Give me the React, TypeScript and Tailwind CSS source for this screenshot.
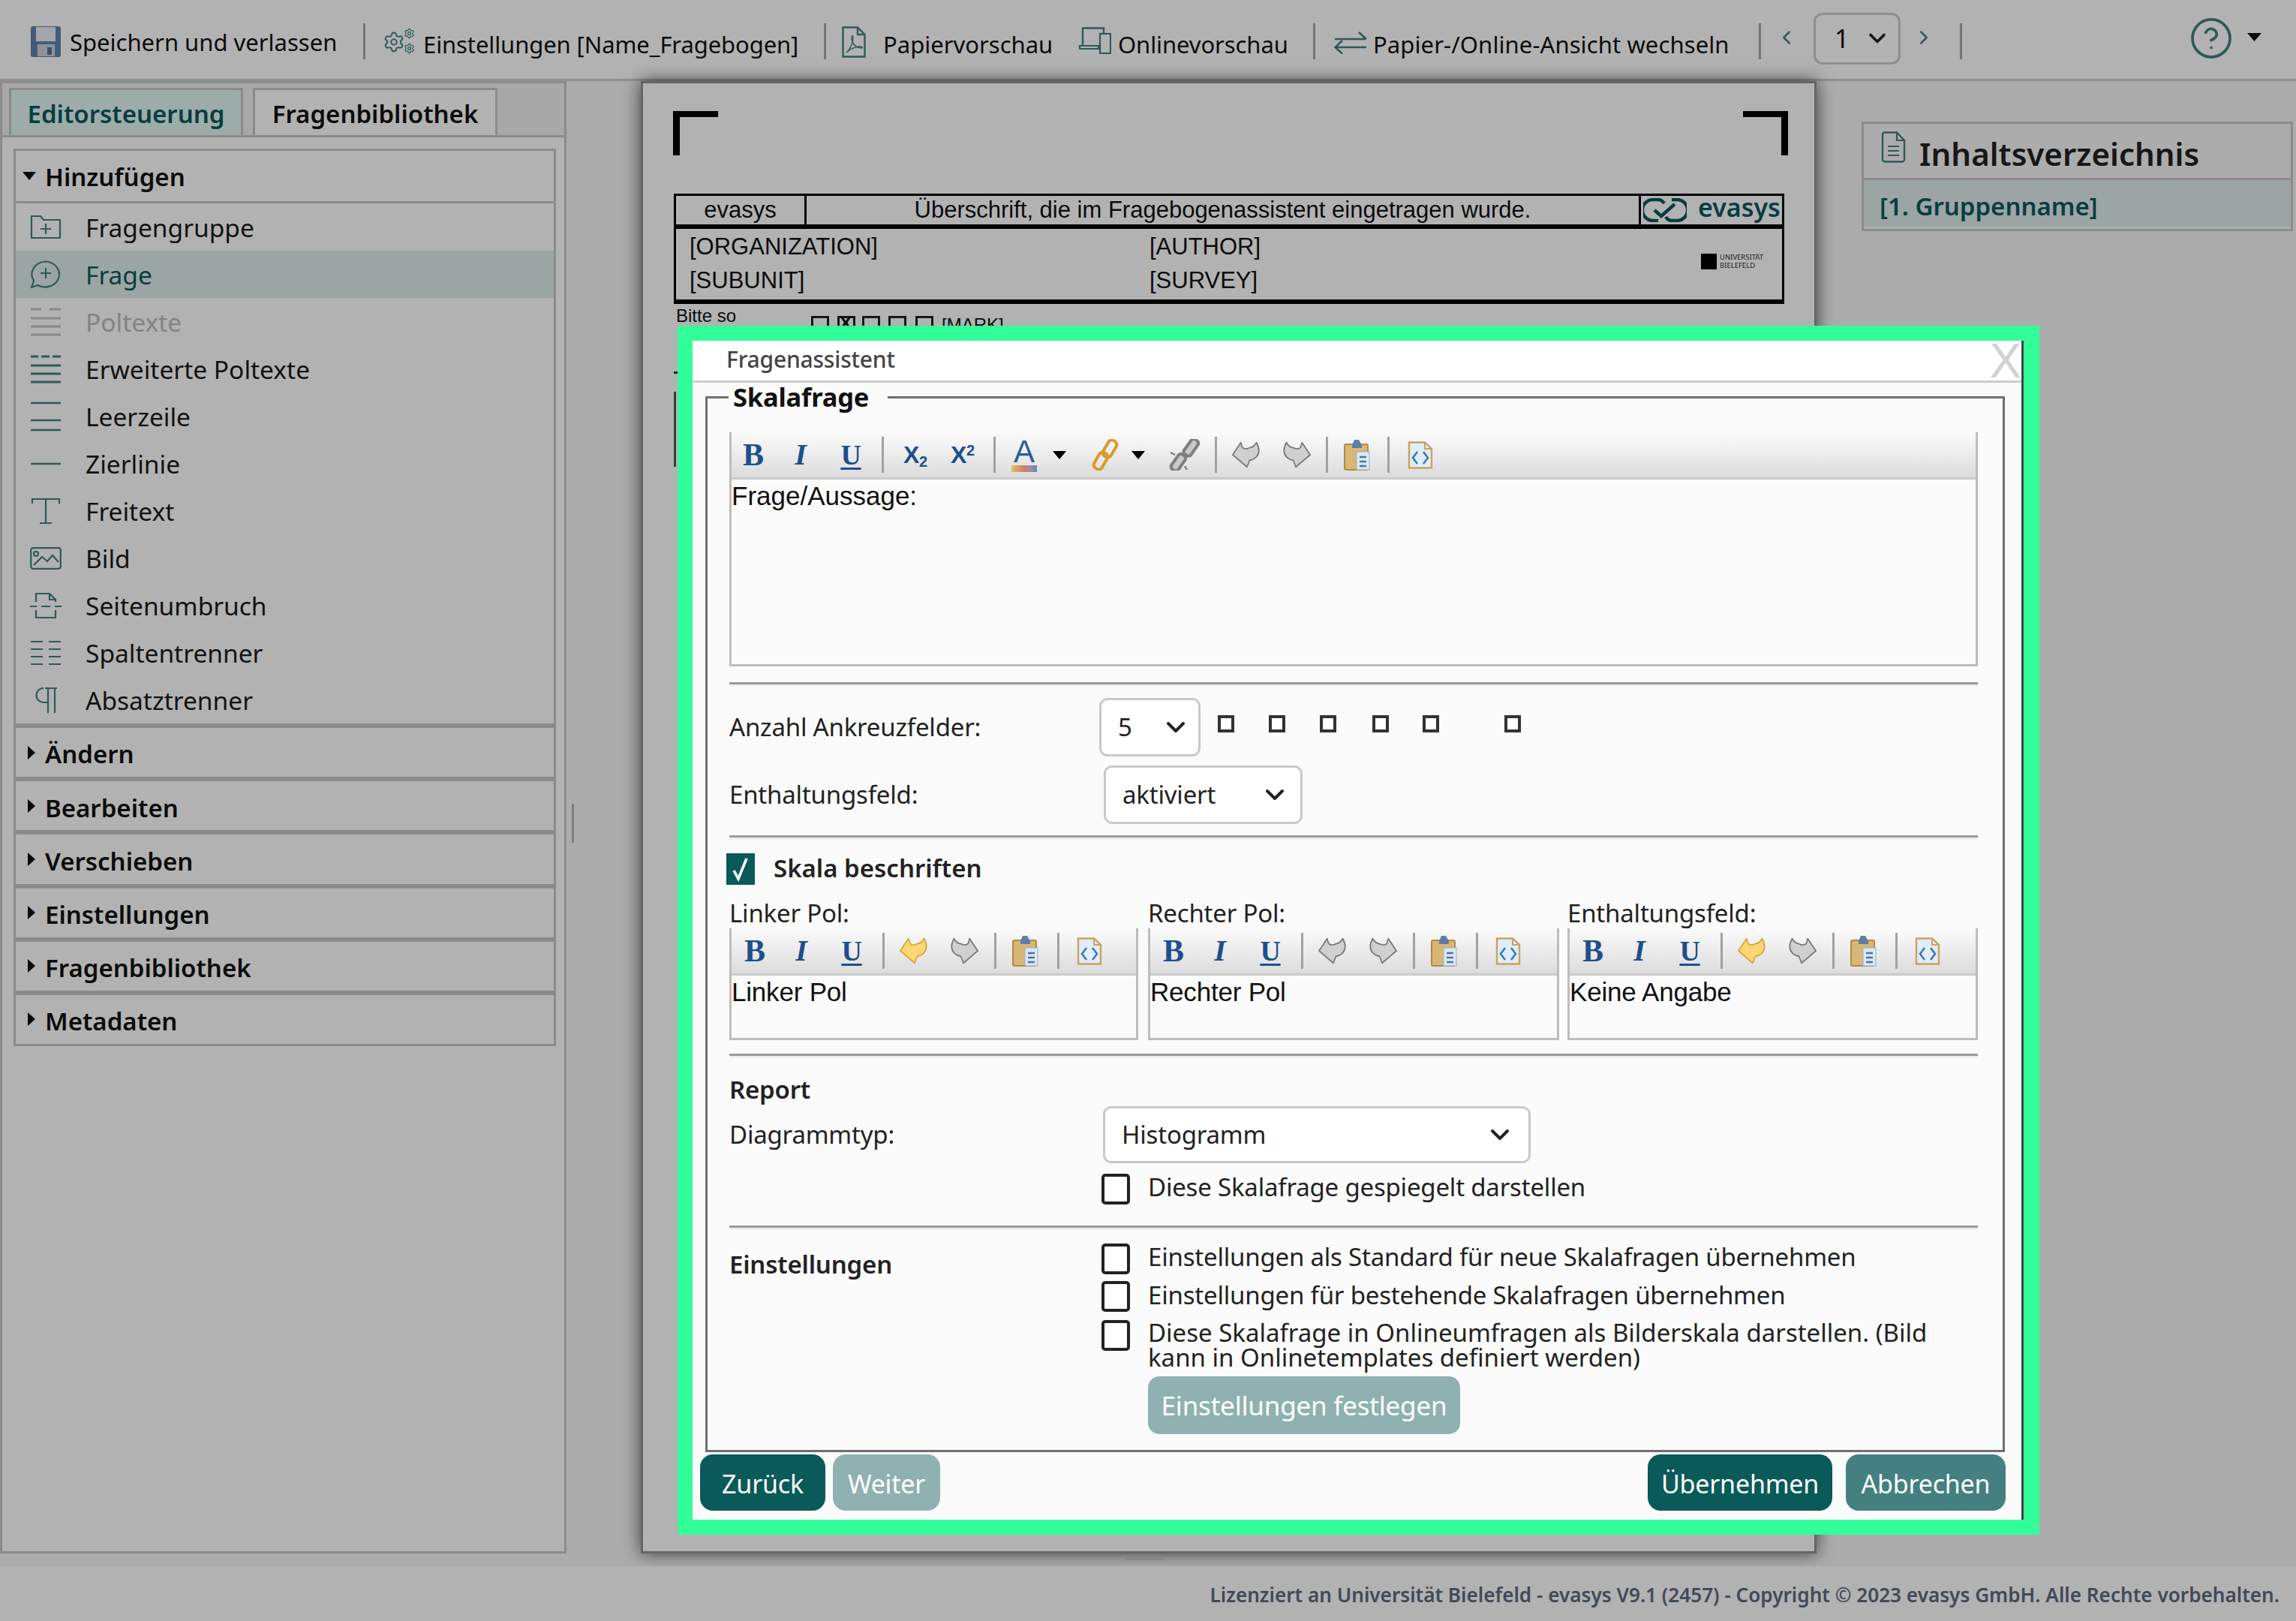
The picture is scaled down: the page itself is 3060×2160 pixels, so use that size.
import React from "react";
import { ChevronDown, ChevronLeft, ChevronRight, Settings, CircleHelp } from "lucide-react";

const T = "#458080";

function Svg({ w, h, vb, children, cls }: { w: number; h: number; vb?: string; children: React.ReactNode; cls?: string }) {
  return (
    <svg width={w} height={h} viewBox={vb ?? `0 0 ${w} ${h}`} fill="none" className={cls}>
      {children}
    </svg>
  );
}

function Sep() {
  return <div className="w-[3px] h-[48px] bg-[#a8a8a8]" />;
}

function Save() {
  return (
    <Svg w={40} h={41}>
      <rect x="0.5" y="0.5" width="39" height="40" rx="2" fill="#5f86b0" stroke="#6b7f95" />
      <rect x="7" y="1" width="26" height="19" fill="#e9eef2" />
      <rect x="9" y="24" width="23" height="16" fill="#c9d2da" />
      <rect x="22" y="28" width="6" height="10" fill="#5a7590" />
    </Svg>
  );
}

function Gears() {
  return (
    <div className="relative w-[43px] h-[36px]">
      <Settings size={30} strokeWidth={1.6} color={T} className="absolute left-0 top-[4px]" />
      <Settings size={15} strokeWidth={2} color={T} className="absolute left-[28px] top-0" />
      <Settings size={15} strokeWidth={2} color={T} className="absolute left-[28px] top-[20px]" />
    </div>
  );
}

function Pdf() {
  return (
    <Svg w={32} h={42}>
      <path d="M1.5 1.5H21L30.5 11V40.5H1.5Z" stroke={T} strokeWidth="2.4" />
      <path d="M21 1.5V11H30.5" stroke={T} strokeWidth="2.4" />
      <path d="M6 35C11 31 15 22 15 15C15 12 13 12 13 15C13 24 20 29 26 29C28 29 28 27 25 27C19 27 11 30 6 35Z" stroke={T} strokeWidth="1.4" />
    </Svg>
  );
}

function Devices() {
  return (
    <Svg w={43} h={36}>
      <path d="M5 24V1.5H33V9" stroke={T} strokeWidth="2.4" />
      <path d="M1 25H26V29H1Z" stroke={T} strokeWidth="2.2" />
      <rect x="28" y="9" width="14" height="26" stroke={T} strokeWidth="2.2" />
    </Svg>
  );
}

function Swap() {
  return (
    <Svg w={44} h={30}>
      <path d="M1 10H42M33 1L43 10" stroke={T} strokeWidth="2.6" />
      <path d="M43 21H2M11 12L1.5 21L11 29.5" stroke={T} strokeWidth="2.6" />
    </Svg>
  );
}

function IconBox({ children }: { children: React.ReactNode }) {
  return <div className="w-[42px] flex justify-center shrink-0">{children}</div>;
}

function MenuIcon({ name, color }: { name: string; color: string }) {
  const s = { stroke: color, strokeWidth: 2.2 };
  switch (name) {
    case "group":
      return (
        <Svg w={42} h={33}>
          <path d="M2 31V2H14L18 7H40V31Z" {...s} strokeLinejoin="round" />
          <path d="M21 12V26M14 19H28" {...s} />
        </Svg>
      );
    case "q":
      return (
        <Svg w={42} h={38}>
          <path d="M21 1.5A19 17 0 1 1 10 33L2 36L5 27A19 17 0 0 1 21 1.5Z" {...s} strokeLinejoin="round" />
          <path d="M21 10V24M14 17H28" {...s} />
        </Svg>
      );
    case "pol":
      return (
        <Svg w={42} h={38}>
          <path d="M1 2H15M26 2H41" stroke={color} strokeWidth="3" />
          <path d="M1 14H41M1 25H41M1 36H41" stroke={color} strokeWidth="3" />
        </Svg>
      );
    case "ext":
      return (
        <Svg w={42} h={38}>
          <path d="M1 2H11M15 2H26M30 2H41" stroke={color} strokeWidth="3" />
          <path d="M1 14H41M1 25H41M1 36H41" stroke={color} strokeWidth="3" />
        </Svg>
      );
    case "empty":
      return (
        <Svg w={42} h={40}>
          <path d="M1 2H41M1 25H41M1 38H41" stroke={color} strokeWidth="2.4" />
        </Svg>
      );
    case "line":
      return (
        <Svg w={42} h={4}>
          <path d="M1 2H41" stroke={color} strokeWidth="2.4" />
        </Svg>
      );
    case "text":
      return (
        <Svg w={40} h={36}>
          <path d="M2 8V2H38V8M20 2V34M12 34H28" {...s} />
        </Svg>
      );
    case "img":
      return (
        <Svg w={42} h={30}>
          <rect x="1.2" y="1.2" width="39.6" height="27.6" rx="3" {...s} />
          <circle cx="8" cy="9" r="3" {...s} />
          <path d="M5 24L16 13L23 19L30 11L38 20" {...s} />
        </Svg>
      );
    case "break":
      return (
        <Svg w={42} h={36}>
          <path d="M8 13V2H26L34 10V13M8 24V34H34V24" {...s} />
          <path d="M26 2V10H34" {...s} />
          <path d="M0 19H9M15 19H27M33 19H42" {...s} />
        </Svg>
      );
    case "cols":
      return (
        <Svg w={42} h={34}>
          <path d="M1 2H17M1 12H17M1 22H17M1 32H17M25 2H41M25 12H41M25 22H41M25 32H41" {...s} />
        </Svg>
      );
    default:
      return (
        <Svg w={34} h={36}>
          <path d="M16 2H32M20 2V35M29 2V35M20 21H14A9.5 9.5 0 0 1 14 2" {...s} />
        </Svg>
      );
  }
}

function CaretRight() {
  return (
    <Svg w={12} h={18} cls="shrink-0">
      <path d="M1 0L11 9L1 18Z" fill="#111" />
    </Svg>
  );
}

function Item({ icon, label, active, off }: { icon: string; label: string; active?: boolean; off?: boolean }) {
  const color = off ? "#c4c4c4" : T;
  return (
    <div className={`h-[63px] flex items-center pl-[19px] text-[33.5px] ${active ? "bg-[#dfedea] text-[#0b5a5a]" : off ? "text-[#bcbcbc]" : "text-[#1a1a1a]"}`}>
      <IconBox>
        <MenuIcon name={icon} color={color} />
      </IconBox>
      <span className="ml-[32px]">{label}</span>
    </div>
  );
}

function Group({ label }: { label: string }) {
  return (
    <div className="h-[72px] border-t-[6px] border-[#c8c8c8] flex items-center pl-[15px] font-semibold text-[#111]">
      <CaretRight />
      <span className="ml-[12px] text-[33px] mt-[5px]">{label}</span>
    </div>
  );
}

const Doc = ({ className }: { className?: string }) => (
  <Svg w={33} h={42} cls={className}>
    <path d="M2 4A3 3 0 0 1 5 1.5H21L31 12V37A3 3 0 0 1 28 40.5H5A3 3 0 0 1 2 37Z" stroke={T} strokeWidth="2.4" />
    <path d="M21 1.5V12H31M9 20H24M9 26H24M9 32H24" stroke={T} strokeWidth="2.2" />
  </Svg>
);

function MiniCaret() {
  return (
    <Svg w={18} h={11}>
      <path d="M0 0H18L9 11Z" fill="#000" />
    </Svg>
  );
}

function CellC({ className, children }: { className: string; children?: React.ReactNode }) {
  return <div className={`flex justify-center items-center shrink-0 ${className}`}>{children}</div>;
}

const Bold = () => <span className="font-['Liberation_Serif',serif] font-bold text-[42px] text-[#1e4f8c] leading-none">B</span>;
const Ital = () => <span className="font-['Liberation_Serif',serif] font-bold italic text-[40px] text-[#1e4f8c] leading-none">I</span>;
const Under = () => <span className="font-['Liberation_Serif',serif] font-bold text-[38px] text-[#1e4f8c] leading-none underline underline-offset-4">U</span>;

function Undo({ on, flip }: { on?: boolean; flip?: boolean }) {
  return (
    <Svg w={38} h={38} vb="0 0 42 38" cls={flip ? "-scale-x-100" : ""}>
      <path
        d="M13 1L15 8Q19 12 25 9Q32 8 36 1Q43 14 36 22Q31 27 26 27L22 37L1 19Z"
        fill={on ? "#fcd774" : "#d0d0d0"}
        stroke={on ? "#d9a63a" : "#7a7a7a"}
        strokeWidth="2"
        strokeLinejoin="round"
      />
    </Svg>
  );
}

function Paste() {
  return (
    <Svg w={35} h={42}>
      <rect x="1" y="7" width="31" height="34" rx="2" fill="#d8b677" stroke="#b28a41" strokeWidth="2" />
      <path d="M11 8L14 1H20L24 8V12H11Z" fill="#5e7ea3" />
      <rect x="17" y="17" width="17" height="24" fill="#dbe8f4" stroke="#9ab0c4" />
      <path d="M21 24H30M21 30H30M21 36H30" stroke="#4a74a5" strokeWidth="2.4" />
    </Svg>
  );
}

function Source() {
  return (
    <Svg w={34} h={37}>
      <path d="M2 1.5H23L32 10V35.5H2Z" fill="#e1edf8" stroke="#c7a45f" strokeWidth="2.4" />
      <path d="M23 1.5V10H32" stroke="#c7a45f" strokeWidth="2" />
      <path d="M13 14L7 22L13 30M21 14L27 22L21 30" stroke="#3d7ab8" strokeWidth="2.6" fill="none" />
    </Svg>
  );
}

function Chain({ grey }: { grey?: boolean }) {
  const c = grey ? "#7e7e7e" : "#d99a2b";
  return (
    <Svg w={42} h={42}>
      <g stroke={c} strokeWidth="4" fill={grey ? "#c8c8c8" : "none"}>
        {grey ? (
          <>
            <rect x="24" y="-1" width="11" height="24" rx="4" transform="rotate(35 29 11)" />
            <rect x="7" y="19" width="11" height="24" rx="4" transform="rotate(35 12 31)" />
            <path d="M2 18L8 21M21 36L24 41" strokeWidth="2.4" />
          </>
        ) : (
          <>
            <rect x="21" y="1" width="12" height="24" rx="5" transform="rotate(30 27 13)" />
            <rect x="9" y="17" width="12" height="24" rx="5" transform="rotate(30 15 29)" />
          </>
        )}
      </g>
    </Svg>
  );
}

function EdSep() {
  return <div className="w-[3px] h-[48px] bg-[#a2a2a2] shrink-0" />;
}

function BigToolbar() {
  return (
    <div className="h-[60px] flex items-center bg-gradient-to-b from-[#fbfbfb] to-[#dcdcdc]">
      <CellC className="w-[58px]"><Bold /></CellC>
      <CellC className="w-[68px]"><Ital /></CellC>
      <CellC className="w-[66px]"><Under /></CellC>
      <div className="ml-[8px]"><EdSep /></div>
      <CellC className="w-[84px]">
        <span className="font-['Liberation_Sans',sans-serif] font-bold text-[32px] leading-none text-[#1e4f8c]">X<sub className="text-[20px]">2</sub></span>
      </CellC>
      <CellC className="w-[42px]">
        <span className="font-['Liberation_Sans',sans-serif] font-bold text-[32px] leading-none text-[#1e4f8c]">X<sup className="text-[20px]">2</sup></span>
      </CellC>
      <div className="ml-[20px]"><EdSep /></div>
      <CellC className="w-[76px]">
        <div className="flex flex-col items-center">
          <span className="font-['Liberation_Sans',sans-serif] text-[42px] leading-[36px] text-[#2a5d9c]">A</span>
          <div className="w-[34px] h-[9px] bg-gradient-to-r from-[#e0c24e] via-[#cf7f6d] to-[#5a8fc4]" />
        </div>
      </CellC>
      <MiniCaret />
      <CellC className="w-[68px] ml-[18px]"><Chain /></CellC>
      <div className="ml-[1px]"><MiniCaret /></div>
      <CellC className="w-[70px] ml-[18px]"><Chain grey /></CellC>
      <div className="ml-[5px]"><EdSep /></div>
      <CellC className="w-[78px]"><Undo /></CellC>
      <CellC className="w-[56px]"><Undo flip /></CellC>
      <div className="ml-[11px]"><EdSep /></div>
      <CellC className="w-[76px]"><Paste /></CellC>
      <div className="ml-[3px]"><EdSep /></div>
      <CellC className="w-[82px]"><Source /></CellC>
    </div>
  );
}

function SmallToolbar({ undoOn }: { undoOn?: boolean }) {
  return (
    <div className="h-[60px] flex items-center bg-gradient-to-b from-[#fbfbfb] to-[#dcdcdc]">
      <CellC className="w-[62px]"><Bold /></CellC>
      <CellC className="w-[62px]"><Ital /></CellC>
      <CellC className="w-[72px]"><Under /></CellC>
      <div className="ml-[5px]"><EdSep /></div>
      <CellC className="w-[78px]"><Undo on={undoOn} /></CellC>
      <CellC className="w-[56px]"><Undo flip /></CellC>
      <div className="ml-[12px]"><EdSep /></div>
      <CellC className="w-[76px]"><Paste /></CellC>
      <div className="ml-[5px]"><EdSep /></div>
      <CellC className="w-[80px]"><Source /></CellC>
    </div>
  );
}

function Hr({ className }: { className: string }) {
  return <div className={`h-[6px] border-t-[3px] border-[#9a9a9a] bg-[#efefef] ${className}`} />;
}

function PolEditor({ label, text, undoOn, className }: { label: string; text: string; undoOn?: boolean; className: string }) {
  return (
    <div className={className}>
      <div className="h-[40px] leading-[40px] text-[33px] text-[#222]">{label}</div>
      <div className="h-[149px] border-x-[3px] border-b-[3px] border-[#bdbdbd]">
        <SmallToolbar undoOn={undoOn} />
        <div className="border-t-[3px] border-[#cacaca] font-['Liberation_Sans',sans-serif] text-[35px] leading-[40px] pt-[2px] text-[#111]">{text}</div>
      </div>
    </div>
  );
}

function Select({ className, value, pad }: { className: string; value: string; pad: string }) {
  return (
    <div className={`flex items-center justify-between bg-white border-[3px] border-[#c9c9c9] rounded-[11px] ${pad} ${className}`}>
      <span>{value}</span>
      <ChevronDown size={40} strokeWidth={2.4} color="#222" />
    </div>
  );
}

function Check() {
  return <div className="w-[38px] h-[41px] border-[4px] border-[#222] rounded-[5px] bg-white shrink-0" />;
}

function Mini({ className }: { className: string }) {
  return <div className={`w-[22px] h-[23px] border-[4px] border-[#333] bg-white mt-[23px] shrink-0 ${className}`} />;
}

function Btn({ children, className }: { children: React.ReactNode; className: string }) {
  return <div className={`flex items-center justify-center h-[75px] pt-[2px] rounded-[17px] text-white text-[34px] ${className}`}>{children}</div>;
}

function EvasysLogo() {
  return (
    <Svg w={58} h={32}>
      <path d="M20 30H13A12 12 0 0 1 13 2H20C24 2 26 4 28 7" stroke="#0b5a5a" strokeWidth="4.4" />
      <path d="M38 2H45A12 12 0 0 1 45 30H38C34 30 32 28 30 25" stroke="#0b5a5a" strokeWidth="4.4" />
      <path d="M15 16L24 24L42 8" stroke="#0b5a5a" strokeWidth="4.4" />
    </Svg>
  );
}

function PaperBox({ className, x }: { className: string; x?: boolean }) {
  return (
    <div className={`w-[24px] h-[24px] border-[3px] border-[#222] shrink-0 relative ${className}`}>
      {x && <span className="absolute -top-[5px] left-[0px] font-['Liberation_Sans',sans-serif] font-bold text-[24px] leading-none">X</span>}
    </div>
  );
}

export default function App() {
  return (
    <div className="relative w-[3060px] h-[2160px] overflow-hidden bg-white font-['Noto_Sans',sans-serif] text-[31px] text-[#111] flex flex-col">
      {/* top toolbar */}
      <header className="h-[108px] shrink-0 border-b-[3px] border-[#cdcdcd] flex items-center pl-[41px] pt-[5px]">
        <Save />
        <span className="ml-[12px] w-[354px] whitespace-nowrap mt-[3px]">Speichern und verlassen</span>
        <div className="ml-[37px]"><Sep /></div>
        <div className="ml-[23px]"><Gears /></div>
        <span className="ml-[11px] w-[497px] whitespace-nowrap mt-[8px] tracking-[-0.1px]">Einstellungen [Name_Fragebogen]</span>
        <div className="ml-[37px]"><Sep /></div>
        <div className="ml-[21px] mt-[2px]"><Pdf /></div>
        <span className="ml-[23px] w-[224px] whitespace-nowrap mt-[8px]">Papiervorschau</span>
        <div className="ml-[37px] -mt-[2px]"><Devices /></div>
        <span className="ml-[9px] w-[224px] whitespace-nowrap mt-[8px] tracking-[-0.1px]">Onlinevorschau</span>
        <div className="ml-[36px]"><Sep /></div>
        <div className="ml-[25px] mt-[3px]"><Swap /></div>
        <span className="ml-[8px] w-[477px] whitespace-nowrap mt-[8px] tracking-[0.1px]">Papier-/Online-Ansicht wechseln</span>
        <div className="ml-[37px]"><Sep /></div>
        <ChevronLeft size={30} strokeWidth={2} color={T} className="ml-[19px] -mt-[11px]" />
        <div className="ml-[21px] -mt-[8px] w-[116px] h-[69px] border-[3px] border-[#ccc] rounded-[12px] flex items-center pl-[25px] gap-[20px] text-[34px]">
          1 <ChevronDown size={36} strokeWidth={2.4} color="#222" />
        </div>
        <ChevronRight size={30} strokeWidth={2} color={T} className="ml-[16px] -mt-[11px]" />
        <div className="ml-[33px]"><Sep /></div>
        <CircleHelp size={60} strokeWidth={1.5} color={T} className="ml-[302px] -mt-[8px]" />
        <div className="ml-[18px] -mt-[11px]"><Svg w={19} h={11}><path d="M0 0H19L9.5 11Z" fill="#111" /></Svg></div>
      </header>

      {/* main */}
      <div className="flex-1 flex bg-[#f6f6f6] min-h-0 pb-[17px]">
        <aside className="w-[755px] shrink-0 bg-white border-[3px] border-[#c8c8c8] flex flex-col">
          <div className="h-[72px] shrink-0 bg-[#f1f1f1] border-b-[3px] border-[#c8c8c8] flex items-end pl-[9px] font-semibold text-[34px]">
            <div className="w-[312px] h-[63px] pt-[4px] bg-[#e2f7f3] border-x-[3px] border-t-[3px] border-[#c8c8c8] flex items-center justify-center text-[#0b5a5a] text-[33px]">Editorsteuerung</div>
            <div className="ml-[13px] w-[326px] h-[63px] pt-[4px] bg-white border-x-[3px] border-t-[3px] border-[#c8c8c8] flex items-center justify-center text-[33px]">Fragenbibliothek</div>
          </div>
          <div className="mx-[15px] mt-[15px] w-[723px] h-[1196px] border-[3px] border-[#c8c8c8] flex flex-col">
            <div className="h-[68px] flex items-center pl-[9px] font-semibold text-[33px]">
              <Svg w={18} h={11}><path d="M0 0H18L9 11Z" fill="#111" /></Svg>
              <span className="ml-[12px] mt-[2px]">Hinzufügen</span>
            </div>
            <div className="border-t-[3px] border-[#c8c8c8]">
              <Item icon="group" label="Fragengruppe" />
              <Item icon="q" label="Frage" active />
              <Item icon="pol" label="Poltexte" off />
              <Item icon="ext" label="Erweiterte Poltexte" />
              <Item icon="empty" label="Leerzeile" />
              <Item icon="line" label="Zierlinie" />
              <Item icon="text" label="Freitext" />
              <Item icon="img" label="Bild" />
              <Item icon="break" label="Seitenumbruch" />
              <Item icon="cols" label="Spaltentrenner" />
              <Item icon="para" label="Absatztrenner" />
            </div>
            <Group label="Ändern" />
            <Group label="Bearbeiten" />
            <Group label="Verschieben" />
            <Group label="Einstellungen" />
            <Group label="Fragenbibliothek" />
            <Group label="Metadaten" />
          </div>
        </aside>

        <div className="w-[99px] shrink-0 flex items-start pt-[963px] pl-[7px]">
          <div className="w-[3px] h-[52px] bg-[#b5b5b5]" />
        </div>

        {/* paper page */}
        <section className="w-[1567px] shrink-0 bg-white border-[3px] border-[#929292] shadow-[0_0_22px_rgba(0,0,0,0.65)] overflow-hidden">
          <div className="pt-[37px] pl-[40px] pr-[35px] flex justify-between">
            <div className="w-[60px] h-[59px] border-t-[8px] border-l-[9px] border-black" />
            <div className="w-[60px] h-[59px] border-t-[8px] border-r-[9px] border-black" />
          </div>
          <div className="mt-[51px] ml-[41px] w-[1480px] font-['Liberation_Sans',sans-serif] text-[31px] text-[#111]">
            <div className="h-[47px] flex border-[3px] border-b-[6px] border-black">
              <div className="w-[174px] border-r-[3px] border-black flex items-center justify-center">evasys</div>
              <div className="flex-1 flex items-center justify-center">Überschrift, die im Fragebogenassistent eingetragen wurde.</div>
              <div className="w-[191px] border-l-[3px] border-black flex items-center pl-[3px] font-['Noto_Sans',sans-serif] font-semibold text-[#0b5a5a] text-[34px]">
                <EvasysLogo />
                <span className="ml-[15px] leading-none -mt-[9px]">evasys</span>
              </div>
            </div>
            <div className="relative h-[100px] border-x-[3px] border-b-[6px] border-black grid grid-cols-[613px_1fr] pl-[18px] pt-[1px] leading-[45px]">
              <div>[ORGANIZATION]<br />[SUBUNIT]</div>
              <div>[AUTHOR]<br />[SURVEY]</div>
              <div className="absolute left-[1366px] top-[33px] flex items-center gap-[4px]">
                <div className="w-[21px] h-[21px] bg-black" />
                <div className="text-[9.5px] leading-[10.5px] font-['Noto_Sans',sans-serif] text-[#333]">UNIVERSITÄT<br />BIELEFELD</div>
              </div>
            </div>
            <div className="flex h-[33px] items-start pl-[3px] pt-[3px] text-[24px] leading-[26px]">
              <span className="w-[180px]">Bitte so</span>
              <PaperBox className="mt-[13px]" />
              <PaperBox className="mt-[13px] ml-[11px]" x />
              <PaperBox className="mt-[13px] ml-[9px]" />
              <PaperBox className="mt-[13px] ml-[11px]" />
              <PaperBox className="mt-[13px] ml-[12px]" />
              <span className="ml-[11px] mt-[12px]">[MARK]</span>
            </div>
            <div className="mt-[57px] w-[8px] h-[3px] bg-[#333]" />
            <div className="mt-[24px] w-[3px] h-[100px] bg-[#555]" />
          </div>
        </section>

        <aside className="w-[575px] shrink-0 ml-[60px] mt-[54px] h-[146px] border-[3px] border-[#c8c8c8] bg-[#f6f6f6]">
          <div className="h-[75px] border-b-[3px] border-[#c8c8c8] flex items-center pl-[23px]">
            <Doc className="-mt-[10px]" />
            <span className="ml-[18px] text-[42px] font-semibold text-[#222] mt-[6px]">Inhaltsverzeichnis</span>
          </div>
          <div className="h-[62px] bg-[#dfedea] flex items-center pl-[21px] pt-[8px] text-[33px] font-semibold text-[#0b5a5a]">[1. Gruppenname]</div>
        </aside>
      </div>

      <footer className="h-[73px] shrink-0 bg-white flex items-start justify-end pr-[22px] pt-[19px] text-[26.15px] font-semibold text-[#5f6b7c] relative">
        <div className="absolute left-[1500px] -top-[11px] w-[51px] h-[3px] bg-[#c0c0c0]" />
        Lizenziert an Universität Bielefeld - evasys V9.1 (2457) - Copyright © 2023 evasys GmbH. Alle Rechte vorbehalten.
      </footer>

      {/* dimming overlay */}
      <div className="absolute inset-0 bg-black/30" />

      {/* modal */}
      <div className="absolute left-[903px] top-[434px] w-[1815px] h-[1611px] border-[20px] border-r-[21px] border-[#33ff99] bg-[#fbfbfb] text-[33px] leading-[40px] tracking-[-0.2px] text-[#222]">
        <div className="h-full border-r-[3px] border-[#444] flex flex-col">
          <div className="h-[56px] shrink-0 bg-white border-b-[3px] border-[#cccccc] flex items-center justify-between pl-[45px]">
            <span className="text-[30px] font-medium text-[#444] -mt-[3px]">Fragenassistent</span>
            <span className="font-['Liberation_Sans',sans-serif] text-[64px] leading-[48px] text-[#d2d2d2]">X</span>
          </div>

          <fieldset className="ml-[17px] w-[1732px] h-[1425px] shrink-0 border-[3px] border-[#707070] pl-[29px] pr-[33px]">
            <legend className="-ml-[1px] pl-[6px] pr-[25px] h-[38px] leading-[38px] font-bold text-[34.5px] text-[#111]">Skalafrage</legend>

            <div className="mt-[28px] h-[312px] border-x-[3px] border-b-[3px] border-[#bdbdbd]">
              <BigToolbar />
              <div className="border-t-[3px] border-[#cacaca] font-['Liberation_Sans',sans-serif] text-[35px] leading-[40px] pt-[2px] text-[#111] tracking-normal">Frage/Aussage:</div>
            </div>

            <Hr className="mt-[21px]" />

            <div className="mt-[15px] flex">
              <span className="w-[493px] mt-[19px]">Anzahl Ankreuzfelder:</span>
              <Select className="w-[135px] h-[78px]" value="5" pad="pl-[22px] pr-[10px]" />
              <Mini className="ml-[23px]" />
              <Mini className="ml-[46px]" />
              <Mini className="ml-[46px]" />
              <Mini className="ml-[48px]" />
              <Mini className="ml-[45px]" />
              <Mini className="ml-[87px]" />
            </div>

            <div className="mt-[12px] flex items-center">
              <span className="w-[499px]">Enthaltungsfeld:</span>
              <Select className="w-[265px] h-[78px]" value="aktiviert" pad="pl-[22px] pr-[14px]" />
            </div>

            <Hr className="mt-[15px]" />

            <div className="mt-[18px] flex items-center -ml-[4px] h-[42px]">
              <div className="w-[38px] h-[42px] bg-[#0b5a5a] flex items-center justify-center">
                <Svg w={24} h={34}><path d="M3 19L9 30L20 3" stroke="#fff" strokeWidth="3.6" /></Svg>
              </div>
              <span className="ml-[25px] font-semibold tracking-normal -mt-[2px]">Skala beschriften</span>
            </div>

            <div className="mt-[18px] flex">
              <PolEditor className="w-[545px]" label="Linker Pol:" text="Linker Pol" undoOn />
              <PolEditor className="w-[548px] ml-[13px]" label="Rechter Pol:" text="Rechter Pol" />
              <PolEditor className="w-[547px] ml-[11px]" label="Enthaltungsfeld:" text="Keine Angabe" undoOn />
            </div>

            <Hr className="mt-[18px]" />

            <div className="mt-[22px] h-[40px] font-semibold">Report</div>
            <div className="mt-[2px] flex items-center">
              <span className="w-[498px]">Diagrammtyp:</span>
              <Select className="w-[570px] h-[76px]" value="Histogramm" pad="pl-[22px] pr-[18px]" />
            </div>
            <div className="mt-[14px] ml-[496px] flex items-center h-[41px]">
              <Check />
              <span className="ml-[24px] -mt-[6px]">Diese Skalafrage gespiegelt darstellen</span>
            </div>

            <Hr className="mt-[28px]" />

            <div className="mt-[17px] flex">
              <span className="w-[496px] font-semibold mt-[9px]">Einstellungen</span>
              <div className="flex-1">
                <div className="flex items-center h-[42px]">
                  <Check />
                  <span className="ml-[24px] -mt-[4px]">Einstellungen als Standard für neue Skalafragen übernehmen</span>
                </div>
                <div className="mt-[9px] flex items-center h-[41px]">
                  <Check />
                  <span className="ml-[24px] -mt-[4px]">Einstellungen für bestehende Skalafragen übernehmen</span>
                </div>
                <div className="mt-[11px] flex items-start">
                  <Check />
                  <span className="ml-[24px] leading-[33px] w-[1060px] tracking-normal">Diese Skalafrage in Onlineumfragen als Bilderskala darstellen. (Bild kann in Onlinetemplates definiert werden)</span>
                </div>
                <div className="mt-[9px] ml-[62px] w-[416px] h-[77px] rounded-[15px] bg-[#8fb1b1] text-white flex items-center justify-center text-[35px]">Einstellungen festlegen</div>
              </div>
            </div>
          </fieldset>

          <div className="mt-[3px] flex justify-between pl-[10px] pr-[21px]">
            <div className="flex gap-[10px]">
              <Btn className="w-[167px] bg-[#0b5a5a]">Zurück</Btn>
              <Btn className="w-[143px] bg-[#8fb1b1]">Weiter</Btn>
            </div>
            <div className="flex gap-[18px]">
              <Btn className="w-[246px] bg-[#0b5a5a]">Übernehmen</Btn>
              <Btn className="w-[213px] bg-[#458080]">Abbrechen</Btn>
            </div>
          </div>
        </div>
      </div>
    </div>
  );
}
